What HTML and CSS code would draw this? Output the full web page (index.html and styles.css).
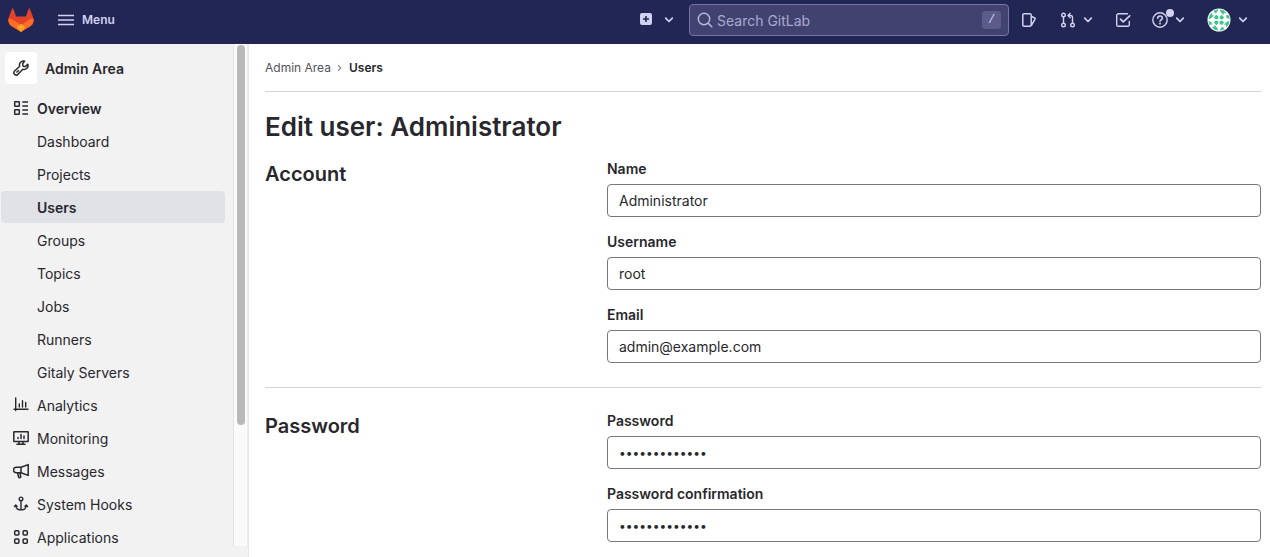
FILE: index.html
```html
<!DOCTYPE html>
<html lang="en">
<head>
<meta charset="utf-8">
<title>Edit user: Administrator</title>
<link rel="stylesheet" href="styles.css">
</head>
<body>
<svg class="sprite" aria-hidden="true">
  <symbol id="chevron" viewBox="0 0 12 12"><path d="M2.7 4.2 6 7.5l3.300-3.300" fill="none" stroke="currentColor" stroke-width="1.700" stroke-linecap="round" stroke-linejoin="round"/></symbol>
  <symbol id="leaf" viewBox="0 0 24 24"><path d="M7.500 9.500 9.700 7.300l2 2.200-2 2.200ZM7.500 7.500h4v4h-4ZM7.500 1.500l4 .2-2.500 3.500-.5-2ZM2 8l3-4v3h2.500L4 9.500l-2.500 1Z"/></symbol>
</svg>
<header class="topbar">
  <div class="topbar-start">
    <a class="logo" href="#" aria-label="Home">
      <svg width="26" height="24" viewBox="0 0 26 24"><path fill="#e24329" d="M4.800 0C4.400 0 1 8.500.6 10.500c-.6 3 .2 5.500 2.400 7.200L13 24l10-6.300c2.200-1.700 3-4.200 2.400-7.200C25 8.500 21.600 0 21.200 0c-.3 0-3.400 8.600-3.400 8.600H8.200S5.100 0 4.800 0Z"/><path fill="#fc6d26" d="M.5 10.500C2.800 10.600 5 11.500 7 13l6 4.300 6-4.300c2-1.500 4.200-2.400 6.500-2.500.5 3-.3 5.500-2.500 7.200L13 24 3 17.700C.8 16 0 13.500.5 10.500Z"/><path fill="#fca326" d="m13 15.800 4.400 3.200L13 24l-4.400-5Z"/></svg>
    </a>
    <button class="menu-button" type="button">
      <svg width="16" height="16" viewBox="0 0 16 16" stroke="currentColor" stroke-width="1.300"><path d="M0 3.500h16M0 8h16M0 12.500h16"/></svg>
      Menu
    </button>
  </div>
  <div class="topbar-end">
    <button class="tool tool-create" type="button" aria-label="Create new">
      <svg class="icon" viewBox="0 0 16 16"><path fill="currentColor" fill-rule="evenodd" d="M4 1h8a2 2 0 0 1 2 2v8a2 2 0 0 1-2 2H4a2 2 0 0 1-2-2V3a2 2 0 0 1 2-2Zm3.200 3v2.200H5v1.600h2.200V10h1.600V7.800H11V6.200H8.800V4Z"/></svg>
      <svg class="chevron"><use href="#chevron"/></svg>
    </button>
    <div class="search-group">
      <label class="search">
        <svg class="icon" viewBox="0 0 16 16" fill="none" stroke="currentColor" stroke-width="1.500" stroke-linecap="round"><circle cx="7" cy="7" r="5.700"/><path d="m11.200 11.200 3.600 3.600"/></svg>
        <input class="search-input" type="search" placeholder="Search GitLab" aria-label="Search GitLab">
        <kbd class="key">/</kbd>
      </label>
      <button class="tool" type="button" aria-label="Issues">
        <svg class="icon" viewBox="0 0 16 16" fill="none" stroke="currentColor" stroke-width="1.500" stroke-linejoin="round"><rect x="1.800" y="1.700" width="8.400" height="12.600" rx="1.500"/><path d="m10.300 4.500 3.100 1.300c.7.300.9.800.6 1.400l-3.700 6.300"/></svg>
      </button>
    </div>
    <div class="tools">
      <button class="tool" type="button" aria-label="Merge requests">
        <svg class="icon" viewBox="0 0 16 16" fill="none" stroke="currentColor" stroke-width="1.400" stroke-linejoin="round"><circle cx="3.500" cy="3" r="1.800"/><circle cx="3.500" cy="13" r="1.800"/><circle cx="12.500" cy="13" r="1.800"/><path d="M3.500 4.800v6.400M12.500 11.200V5.500a2 2 0 0 0-2-2H8.300M10.500 1 8 3.500 10.500 6"/></svg>
        <svg class="chevron"><use href="#chevron"/></svg>
      </button>
      <button class="tool" type="button" aria-label="To-do list">
        <svg class="icon" viewBox="0 0 16 16" fill="none" stroke="currentColor" stroke-width="1.400" stroke-linecap="round" stroke-linejoin="round"><path d="M12.500 1.700H3.700a2 2 0 0 0-2 2v9a1.600 1.600 0 0 0 1.600 1.600h9.400a1.600 1.600 0 0 0 1.600-1.600V9.500"/><path d="m5.500 7.200 2.700 2.700 6.500-6" stroke-width="1.700"/></svg>
      </button>
      <button class="tool tool-help" type="button" aria-label="Help">
        <svg class="icon" viewBox="0 0 16 16" fill="none" stroke="currentColor" stroke-width="1.400" stroke-linecap="round"><circle cx="8" cy="8" r="7.200"/><path d="M5.700 6.300C5.700 4.900 6.700 4 8 4s2.300.9 2.300 2.200c0 1.600-2.300 1.700-2.300 3.100" stroke-width="1.600"/><circle cx="8" cy="11.600" r=".4"/></svg>
        <span class="dot"></span>
        <svg class="chevron"><use href="#chevron"/></svg>
      </button>
      <button class="tool" type="button" aria-label="Administrator">
        <svg class="avatar" viewBox="0 0 24 24"><circle cx="12" cy="12" r="11.500" fill="#fff"/><g fill="#3fc78b"><g id="quarter"><path d="m9.500 6.800 2.100 2.600-2.100 2.200-2.800-2.100ZM8 7.800h3.300v3.300H8ZM7.500 2l4-.7L9.300 5 7 4.500ZM2.300 7.500l2.900-3v2.700l2 .3-3.500 3L1.500 11Z"/></g><use href="#quarter" transform="rotate(90 12 12)"/><use href="#quarter" transform="rotate(180 12 12)"/><use href="#quarter" transform="rotate(270 12 12)"/></g></svg>
        <svg class="chevron"><use href="#chevron"/></svg>
      </button>
    </div>
  </div>
</header>
<div class="shell">
  <aside class="sidebar">
    <div class="sidebar-body">
      <nav class="nav" aria-label="Admin">
        <a class="context" href="#">
          <span class="context-icon"><svg class="icon" viewBox="0 0 16 16" fill="none" stroke="currentColor" stroke-width="1.500" stroke-linejoin="round"><path d="M11.600 1.100A4 4 0 0 0 6.700 6.300L1.400 11.200a2 2 0 0 0 0 2.900l.6.500a2 2 0 0 0 2.800-.1l5-5.200a4 4 0 0 0 5-5.100l-2.500 2.400-2.200-.4-.5-2.400Z"/><path d="m3.500 12.500 2.300-2.300"/></svg></span>
          <span class="nav-text">Admin Area</span>
        </a>
        <a class="nav-item strong" href="#"><svg class="icon" viewBox="0 0 16 16" fill="none" stroke="currentColor" stroke-width="1.500"><rect x="1.700" y="1.700" width="4.600" height="4.600" rx=".5"/><rect x="1.700" y="9.700" width="4.600" height="4.600" rx=".5"/><path d="M9.300 2h5.700M9.300 6H15M9.300 10H15M9.300 14H15"/></svg><span class="nav-text">Overview</span></a>
        <a class="nav-item sub" href="#"><span class="nav-text">Dashboard</span></a>
        <a class="nav-item sub" href="#"><span class="nav-text">Projects</span></a>
        <a class="nav-item sub active" href="#" aria-current="page"><span class="nav-text">Users</span></a>
        <a class="nav-item sub" href="#"><span class="nav-text">Groups</span></a>
        <a class="nav-item sub" href="#"><span class="nav-text">Topics</span></a>
        <a class="nav-item sub" href="#"><span class="nav-text">Jobs</span></a>
        <a class="nav-item sub" href="#"><span class="nav-text">Runners</span></a>
        <a class="nav-item sub" href="#"><span class="nav-text">Gitaly Servers</span></a>
        <a class="nav-item" href="#"><svg class="icon" viewBox="0 0 16 16" fill="none" stroke="currentColor" stroke-width="1.400" stroke-linecap="round"><path d="M2.700 1v12.500M1 12.300h14M6.300 7v3M9.500 3.800V10M12.700 5.500V10"/></svg><span class="nav-text">Analytics</span></a>
        <a class="nav-item" href="#"><svg class="icon" viewBox="0 0 16 16" fill="none" stroke="currentColor" stroke-width="1.500" stroke-linecap="round"><rect x=".8" y="1.800" width="14.400" height="9.700" rx=".5"/><path d="M5 7.500v1M8 4.500v4M11 6v2.500M6 11.800v2M10 11.800v2M4 14.300h8"/></svg><span class="nav-text">Monitoring</span></a>
        <a class="nav-item" href="#"><svg class="icon" viewBox="0 0 16 16" fill="none" stroke="currentColor" stroke-width="1.500" stroke-linejoin="round"><path d="M8 4.300 15.200 1.600v10.800L8 9.700H3.200a2.500 2.500 0 0 1 0-5.400Zm0 0v5.400M4.500 9.800l1.200 4.400c.3.800 2.200.6 2-.5l-.8-3.800"/></svg><span class="nav-text">Messages</span></a>
        <a class="nav-item" href="#"><svg class="icon" viewBox="0 0 16 16" fill="none" stroke="currentColor" stroke-width="1.400" stroke-linecap="round" stroke-linejoin="round"><circle cx="8" cy="2.900" r="1.800"/><path d="M8 4.800v9M1.500 10.500 2.700 9l1.300 1.300M12 10.300 13.300 9l1.200 1.500M2.700 9.500c.2 2.600 2.300 4.400 5.300 4.400s5.100-1.800 5.300-4.400"/></svg><span class="nav-text">System Hooks</span></a>
        <a class="nav-item" href="#"><svg class="icon" viewBox="0 0 16 16" fill="none" stroke="currentColor" stroke-width="1.500"><rect x="1.700" y="1.700" width="4.200" height="4.200" rx="1"/><rect x="10.100" y="1.700" width="4.200" height="4.200" rx="1"/><rect x="1.700" y="10.100" width="4.200" height="4.200" rx="1"/><rect x="10.100" y="10.100" width="4.200" height="4.200" rx="1"/></svg><span class="nav-text">Applications</span></a>
      </nav>
      <div class="scroll-track" aria-hidden="true"><div class="scroll-thumb"></div></div>
    </div>
    <div class="sidebar-foot"></div>
  </aside>
  <main class="content">
    <nav class="crumbs" aria-label="Breadcrumb">
      <a href="#">Admin Area</a>
      <svg class="crumb-arrow" width="8" height="8" viewBox="0 0 8 8"><path d="m2 1.200 2.800 2.800L2 6.800" fill="none" stroke="currentColor" stroke-width="1.200"/></svg>
      <a class="crumb-current" href="#" aria-current="page">Users</a>
    </nav>
    <h1 class="title">Edit user: Administrator</h1>
    <form>
      <section class="section">
        <h2 class="section-title">Account</h2>
        <div class="fields">
          <div class="field"><label for="name">Name</label><input id="name" type="text" value="Administrator"></div>
          <div class="field"><label for="username">Username</label><input id="username" type="text" value="root"></div>
          <div class="field"><label for="email">Email</label><input id="email" type="email" value="admin@example.com"></div>
        </div>
      </section>
      <section class="section divided">
        <h2 class="section-title">Password</h2>
        <div class="fields">
          <div class="field"><label for="password">Password</label><input id="password" type="password" value="1234567890123"></div>
          <div class="field"><label for="confirm">Password confirmation</label><input id="confirm" type="password" value="1234567890123"></div>
        </div>
      </section>
    </form>
  </main>
</div>
</body>
</html>
```
FILE: styles.css
```css
* { box-sizing: border-box; }
body {
  margin: 0;
  height: 100vh;
  display: flex;
  flex-direction: column;
  overflow: hidden;
  background: #fff;
  color: #28272d;
  font: 14px/20px Inter, "Liberation Sans", sans-serif;
}
a { color: inherit; text-decoration: none; }
button, input { font: inherit; color: inherit; }
svg { display: block; flex: none; }
.sprite { position: absolute; width: 0; height: 0; }
.icon { width: 16px; height: 16px; }
.chevron { width: 12px; height: 12px; }

.topbar {
  flex: none;
  height: 44px;
  padding: 0 21px 4px 8px;
  display: flex;
  align-items: center;
  justify-content: space-between;
  background: #222654;
  color: #d1d1f0;
}
.topbar-start { display: flex; align-items: center; gap: 24px; }
.menu-button, .tool {
  display: flex;
  align-items: center;
  padding: 0;
  border: 0;
  background: none;
}
.menu-button { gap: 8px; font-size: 12px; font-weight: 600; }
.topbar-end { display: flex; align-items: center; gap: 23px; }
.tool-create { gap: 9px; margin-right: -9px; }
.search-group { display: flex; align-items: center; gap: 12px; }
.search {
  width: 320px;
  height: 32px;
  padding: 0 7px;
  display: flex;
  align-items: center;
  gap: 4px;
  border: 1px solid #7574a5;
  border-radius: 4px;
  background: #41426f;
  color: #b9b8db;
}
.search-input {
  flex: 1;
  min-width: 0;
  padding: 2px 0 0;
  border: 0;
  background: none;
  outline: 0;
}
.search-input::placeholder { color: #aaa9d0; opacity: 1; }
.key {
  width: 19px;
  height: 18px;
  border-radius: 3px;
  background: #5c5b89;
  color: #d1d1f0;
  font: 12px/18px "Liberation Mono", monospace;
  text-align: center;
}
.tools { display: flex; align-items: center; gap: 21px; }
.tools .tool { gap: 6px; }
.tool-help { position: relative; }
.dot {
  position: absolute;
  left: 14px;
  top: -3px;
  width: 8px;
  height: 8px;
  border-radius: 50%;
  background: #d1d1f0;
}
.avatar { width: 24px; height: 24px; }

.shell { flex: 1; min-height: 0; display: flex; }
.sidebar {
  flex: none;
  width: 249px;
  display: flex;
  flex-direction: column;
  border-right: 1px solid #e7e7e7;
  background: #f2f2f2;
}
.sidebar-body { flex: 1; min-height: 0; display: flex; }
.nav {
  flex: 1;
  min-width: 0;
  padding: 8px 8px 0 1px;
  overflow: hidden;
}
.nav-text { padding-top: 2px; }
.context {
  display: flex;
  align-items: center;
  gap: 8px;
  margin: 0 0 8px 4px;
  font-weight: 600;
}
.context-icon {
  display: grid;
  place-items: center;
  width: 32px;
  height: 32px;
  border-radius: 4px;
  background: #fff;
}
.nav-item {
  display: flex;
  align-items: center;
  gap: 8px;
  height: 32px;
  margin-bottom: 1px;
  padding-left: 12px;
  border-radius: 4px;
}
.strong { font-weight: 600; }
.sub { padding-left: 36px; }
.active { background: #e1e2e7; font-weight: 600; }
.scroll-track {
  flex: none;
  width: 15px;
  padding: 1px 3px;
  border-left: 1px solid #e3e3e3;
  border-right: 1px solid #ededed;
  background: #fafafa;
}
.scroll-thumb { width: 8px; height: 76%; border-radius: 4px; background: #b9b9b9; }
.sidebar-foot { flex: none; height: 11px; }

.content { flex: 1; min-width: 0; padding: 0 9px 0 16px; overflow: hidden; }
.crumbs {
  display: flex;
  align-items: center;
  gap: 5px;
  height: 48px;
  border-bottom: 1px solid #d2d2d4;
  font-size: 12px;
  color: #535158;
}
.crumb-arrow { color: #89888d; }
.crumb-current { color: #28272d; font-weight: 600; }
.title { margin: 19px 0 16px; font-size: 26px; line-height: 32px; font-weight: 600; }
.section {
  display: grid;
  grid-template-columns: calc((100% - 60px) / 3) 1fr;
  gap: 30px;
}
.section-title { margin: 0; font-size: 20px; line-height: 30px; font-weight: 600; }
.divided { margin-top: 9px; padding-top: 23px; border-top: 1px solid #d2d2d4; }
.field { margin-bottom: 15px; }
.field label { display: block; margin-bottom: 5px; font-weight: 600; }
.field input {
  display: block;
  width: 100%;
  height: 33px;
  padding: 0 11px;
  border: 1px solid #77767c;
  border-radius: 4px;
  background: #fff;
}
.field input[type="password"] { font-size: 12px; }
```
